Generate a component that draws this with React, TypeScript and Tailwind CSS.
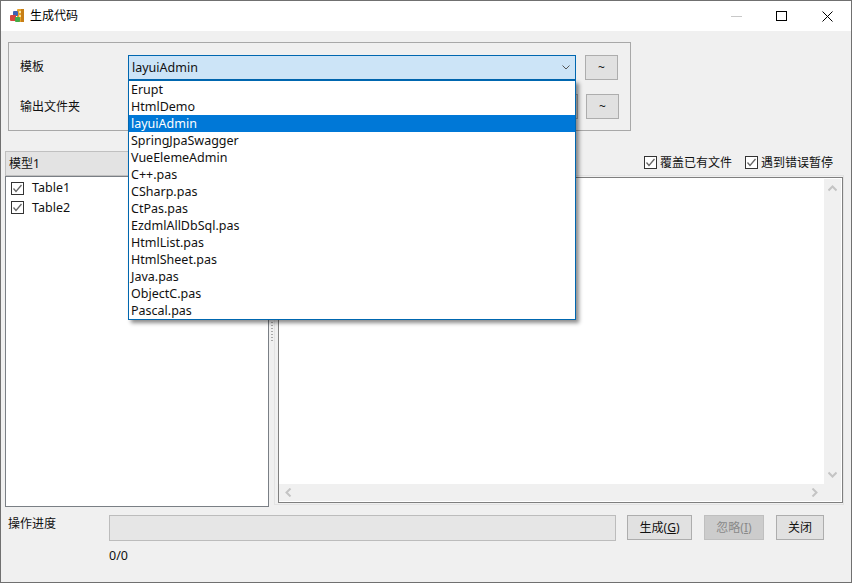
const items = [
  'Erupt', 'HtmlDemo', 'layuiAdmin', 'SpringJpaSwagger', 'VueElemeAdmin', 'C++.pas', 'CSharp.pas',
  'CtPas.pas', 'EzdmlAllDbSql.pas', 'HtmlList.pas', 'HtmlSheet.pas', 'Java.pas', 'ObjectC.pas', 'Pascal.pas',
];

function CheckBox() {
  return (
    <svg width="13" height="13" viewBox="0 0 13 13" className="shrink-0">
      <rect x="0.5" y="0.5" width="12" height="12" fill="#fff" stroke="#333" />
      <path d="M2.5 6.5 L5 9.5 L10.5 3" fill="none" stroke="#666" strokeWidth="1.3" />
    </svg>
  );
}

function AppIcon() {
  return (
    <svg width="16" height="16" viewBox="0 0 16 16" className="shrink-0">
      <rect x="8" y="1" width="7" height="13" rx="1" fill="#e8a32c" />
      <rect x="12" y="1" width="3" height="13" fill="#c77f17" />
      <rect x="10" y="3" width="2" height="2" fill="#fbe3a0" />
      <rect x="10" y="7" width="2" height="2" fill="#fbe3a0" />
      <rect x="4" y="3" width="5" height="5" rx="1" fill="#3f62b5" />
      <rect x="1" y="7" width="6" height="6" rx="1" fill="#d8463c" />
      <rect x="6" y="9" width="5" height="5" rx="1" fill="#45ab48" />
    </svg>
  );
}

function TildeButton({ className }: { className: string }) {
  return (
    <div className={`w-[33px] h-[25px] bg-[#e1e1e1] border border-[#adadad] flex items-center justify-center text-[12px] ${className}`}>
      ~
    </div>
  );
}

function Arrow({ d }: { d: string }) {
  return (
    <svg width="9" height="9" viewBox="0 0 9 9">
      <path d={d} fill="none" stroke="#c4c4c4" strokeWidth="2" />
    </svg>
  );
}

export default function App() {
  return (
    <div className="relative w-[852px] h-[583px] flex flex-col overflow-hidden bg-[#f0f0f0] border border-[#707070] text-[12.5px] leading-[17px] text-[#111] font-['Noto_Sans','Noto_Sans_CJK_SC',sans-serif]">
      {/* title bar */}
      <div className="h-[30px] bg-white flex items-center shrink-0 pl-[8px]">
        <AppIcon />
        <span className="ml-[5px] text-[12px] text-black -translate-y-px">生成代码</span>
        <div className="ml-auto flex items-center">
          <div className="w-[11px] h-px bg-[#c8c8c8] mr-[34px]" />
          <div className="w-[11px] h-[10px] border border-black mr-[35px]" />
          <svg width="11" height="11" viewBox="0 0 11 11" className="mr-[18px]">
            <path d="M0.5 0.5 L10.5 10.5 M10.5 0.5 L0.5 10.5" stroke="#000" strokeWidth="1" />
          </svg>
        </div>
      </div>

      {/* group box */}
      <div className="ml-[7px] mt-[11px] w-[623px] h-[89px] border border-[#a8a8a8] shrink-0 pl-[11px] pt-[12px]">
        <div className="flex items-center h-[25px]">
          <span className="w-[108px] text-[12px] -translate-y-px">模板</span>
          <div className="w-[448px] h-[25px] bg-[#cce4f7] border border-[#0067b0] flex items-center pl-[3px] pr-[5px] justify-between">
            <span>layuiAdmin</span>
            <svg width="8" height="5" viewBox="0 0 8 5">
              <path d="M0.5 0.5 L4 4 L7.5 0.5" fill="none" stroke="#555" strokeWidth="1" />
            </svg>
          </div>
          <TildeButton className="ml-[9px]" />
        </div>
        <div className="flex items-center h-[25px] mt-[14px]">
          <span className="w-[108px] text-[12px]">输出文件夹</span>
          <div className="w-[450px] h-[25px] bg-[#e1e1e1] border border-[#adadad]" />
          <TildeButton className="ml-[8px]" />
        </div>
      </div>

      {/* panels */}
      <div className="flex ml-[4px] mt-[20px] h-[356px] shrink-0">
        <div className="w-[264px] flex flex-col">
          <div className="h-[25px] bg-[#e3e3e3] border border-[#c0c0c0] flex items-center pl-[3px] text-[12px]">模型1</div>
          <div className="flex-1 bg-white border border-[#7a7f85] pt-[5px] pl-[5px] flex flex-col gap-[6px]">
            <div className="flex items-center gap-[8px] h-[13px]"><CheckBox /><span className="-translate-y-px">Table1</span></div>
            <div className="flex items-center gap-[8px] h-[13px]"><CheckBox /><span>Table2</span></div>
          </div>
        </div>

        {/* splitter grip */}
        <div className="w-[5px] flex flex-col items-center justify-center">
          <div className="w-[2px] h-[26px] bg-[repeating-linear-gradient(to_bottom,#a8a8a8_0px,#a8a8a8_1px,transparent_1px,transparent_3px)]" />
        </div>

        <div className="w-[570px] flex flex-col">
          <div className="h-[24px] flex items-start pt-[3px] justify-end gap-[13px] pr-[11px] text-[12px] shrink-0">
            <div className="flex items-center gap-[3px]"><CheckBox /><span>覆盖已有文件</span></div>
            <div className="flex items-center gap-[3px]"><CheckBox /><span>遇到错误暂停</span></div>
          </div>
          <div className="h-[330px] border border-[#e3e3e3] shrink-0">
            <div className="h-[326px] bg-white border-[1px] border-[#7f7f7f] ml-[3px] mt-px flex flex-col pr-px pb-px pt-[1px]">
              <div className="flex flex-1 min-h-0">
                <div className="flex-1" />
                <div className="w-[17px] bg-[#f0f0f0] flex flex-col items-center justify-between py-[5px]">
                  <Arrow d="M0.5 6.5 L4.5 2.5 L8.5 6.5" />
                  <Arrow d="M0.5 2.5 L4.5 6.5 L8.5 2.5" />
                </div>
              </div>
              <div className="h-[17px] bg-[#f0f0f0] flex items-center justify-between px-[5px] pr-[22px] shrink-0">
                <Arrow d="M6.5 0.5 L2.5 4.5 L6.5 8.5" />
                <Arrow d="M2.5 0.5 L6.5 4.5 L2.5 8.5" />
              </div>
            </div>
          </div>
        </div>
      </div>

      {/* progress row */}
      <div className="flex mt-[8px] pl-[7px] shrink-0">
        <span className="w-[101px] text-[12px]">操作进度</span>
        <div className="w-[507px] h-[26px] bg-[#e6e6e6] border border-[#bcbcbc]" />
        <div className="ml-[11px] w-[65px] h-[25px] bg-[#e1e1e1] border border-[#adadad] flex items-center justify-center text-[12px]">生成(<u>G</u>)</div>
        <div className="ml-[12px] w-[60px] h-[25px] bg-[#cccccc] border border-[#bfbfbf] flex items-center justify-center text-[12px] text-[#8a8a8a]">忽略(<u>I</u>)</div>
        <div className="ml-[12px] w-[48px] h-[25px] bg-[#e1e1e1] border border-[#adadad] flex items-center justify-center text-[12px]">关闭</div>
      </div>
      <div className="pl-[108px] mt-[6px]">0/0</div>

      {/* open dropdown list */}
      <div className="absolute left-[127px] top-[79px] w-[448px] h-[240px] bg-white border border-[#0067b0] shadow-[3px_3px_4px_rgba(0,0,0,0.45)]">
        {items.map(item => (
          <div
            key={item}
            className={`h-[17px] pl-[2px] leading-[17px] ${item === 'layuiAdmin' ? 'bg-[#0078d7] text-white' : ''}`}
          >
            {item}
          </div>
        ))}
      </div>
    </div>
  );
}
